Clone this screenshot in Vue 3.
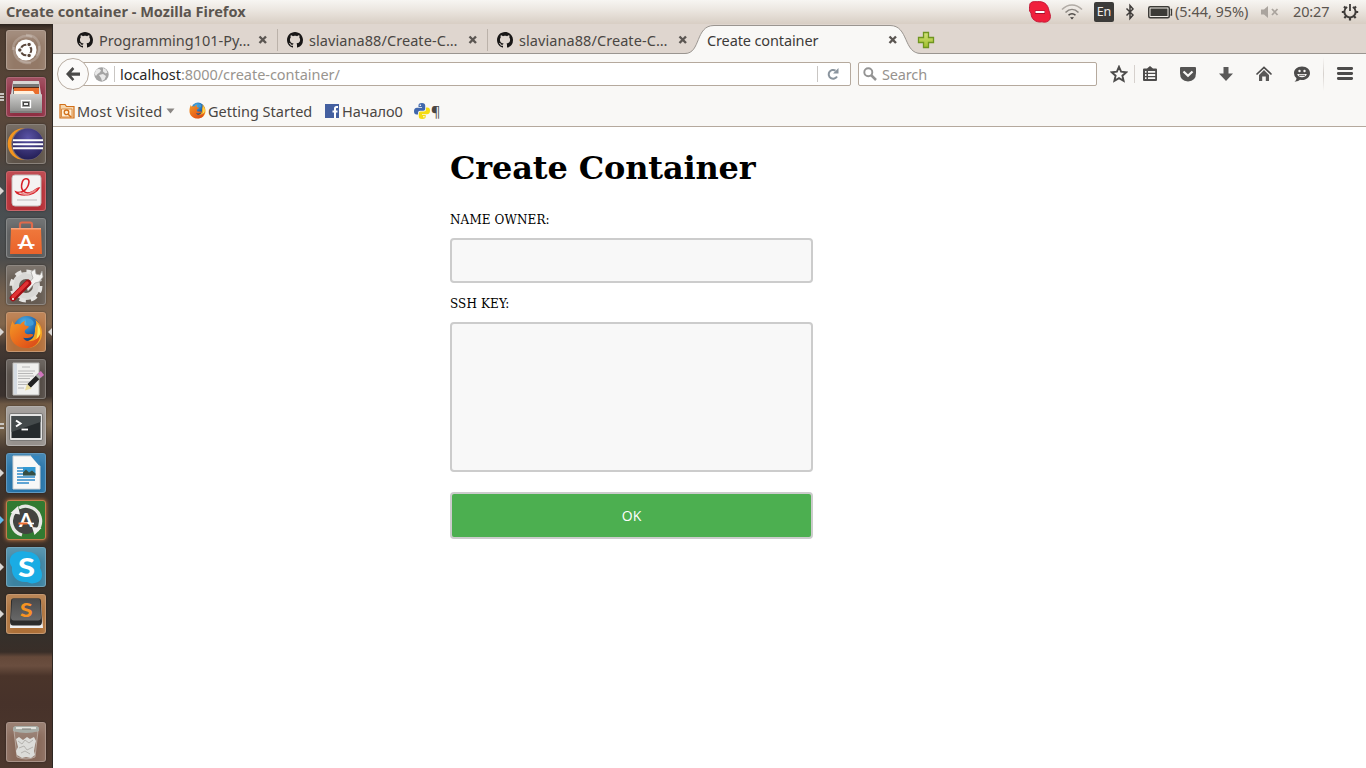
<script setup>
const githubMark = 'M8 0C3.58 0 0 3.58 0 8c0 3.54 2.29 6.53 5.47 7.59.4.07.55-.17.55-.38 0-.19-.01-.82-.01-1.49-2.01.37-2.53-.49-2.69-.94-.09-.23-.48-.94-.82-1.13-.28-.15-.68-.52-.01-.53.63-.01 1.08.58 1.23.82.72 1.21 1.87.87 2.33.66.07-.52.28-.87.51-1.07-1.78-.2-3.64-.89-3.64-3.95 0-.87.31-1.59.82-2.15-.08-.2-.36-1.02.08-2.12 0 0 .67-.21 2.2.82.64-.18 1.32-.27 2-.27s1.36.09 2 .27c1.53-1.04 2.2-.82 2.2-.82.44 1.1.16 1.92.08 2.12.51.56.82 1.27.82 2.15 0 3.07-1.87 3.75-3.65 3.95.29.25.54.73.54 1.48 0 1.07-.01 1.93-.01 2.2 0 .21.15.46.55.38A8.01 8.01 0 0 0 16 8c0-4.42-3.58-8-8-8z'
const tabs = [
  { title: 'Programming101-Py…', cls: 't-prog' },
  { title: 'slaviana88/Create-C…', cls: 't-slav' },
  { title: 'slaviana88/Create-C…', cls: 't-slav' },
]
const apps = [
  { id: 'dash' },
  { id: 'files', mark: 'bars3' },
  { id: 'eclipse' },
  { id: 'reader', mark: 'arrow' },
  { id: 'software' },
  { id: 'settings' },
  { id: 'firefox', mark: 'arrow', focus: true },
  { id: 'gedit' },
  { id: 'terminal', mark: 'bars2' },
  { id: 'writer', mark: 'arrow' },
  { id: 'updater', mark: 'arrow blue' },
  { id: 'skype', mark: 'arrow' },
  { id: 'sublime', mark: 'arrow' },
  { id: 'trash' },
]
</script>

<template>
  <div class="desktop">
    <svg class="defs" width="0" height="0">
      <defs>
        <linearGradient id="gMetal" x1="0" y1="0" x2="0" y2="1"><stop offset="0" stop-color="#cfcfcd" /><stop offset="1" stop-color="#8b8b89" /></linearGradient>
        <linearGradient id="gOrange" x1="0" y1="0" x2="0" y2="1"><stop offset="0" stop-color="#f0793c" /><stop offset="1" stop-color="#e9622a" /></linearGradient>
        <linearGradient id="gFox" x1="0" y1="0" x2="1" y2="1"><stop offset="0" stop-color="#f39a26" /><stop offset=".5" stop-color="#ea6a1c" /><stop offset="1" stop-color="#d6451a" /></linearGradient>
        <radialGradient id="gGlobe" cx=".4" cy=".25" r=".8"><stop offset="0" stop-color="#4fb6ea" /><stop offset=".6" stop-color="#1d62ac" /><stop offset="1" stop-color="#0f2f66" /></radialGradient>
        <radialGradient id="gEcl" cx=".5" cy=".3" r=".7"><stop offset="0" stop-color="#5a53a6" /><stop offset="1" stop-color="#241f56" /></radialGradient>
        <linearGradient id="gKey" x1="0" y1="0" x2="0" y2="1"><stop offset="0" stop-color="#4a4a4a" /><stop offset="1" stop-color="#686868" /></linearGradient>
        <linearGradient id="gPlus" x1="0" y1="0" x2="0" y2="1"><stop offset="0" stop-color="#d3e27a" /><stop offset="1" stop-color="#9fbf2c" /></linearGradient>
        <symbol id="fox" viewBox="0 0 36 36">
          <circle cx="19" cy="15" r="14" fill="url(#gGlobe)" />
          <path d="M18 4c3-1 5 0 7 2 2 2 1 5-1 5-3 1-5 0-6-3z" fill="#3f9bd8" />
          <path d="M28 5c5 4 7 9 7 14 0 6-3 11-8 14-4 2-8 2-11 1l-3-7c7 2 13-1 14-7 1-3 0-5 1-8 1-2 1-4 0-7z" fill="#f6a423" />
          <path d="M30 9c5 7 4 14-2 20 2-6 3-13 2-20z" fill="#fde85a" />
          <path d="M4 6c0 2 1 3 2 4 2-1 4-1 6 0 1-2 3-3 5-4-1 2-1 4 0 5l4 1c0 2-3 3-4 4-1 2 0 4 2 4 3 1 5-1 7 1-1 2-3 3-5 3-2 1-4 0-6 0 2 4 8 5 13 2 2-1 4-3 5-6 0 9-6 15-15 15C8 35 1 28 1 19 1 14 2 10 4 6z" fill="url(#gFox)" />
        </symbol>
        <symbol id="close" viewBox="0 0 10 10"><path d="M1.500 1.500l6.500 6.500M8 1.500L1.500 8" stroke="#5b5652" stroke-width="2.400" fill="none" /></symbol>
      </defs>
    </svg>

    <header class="panel">
      <div class="win-title"><span class="t-window">Create container - Mozilla Firefox</span></div>
      <div class="indicators">
        <svg class="i-skype" width="22" height="22" viewBox="0 0 22 22"><path d="M.8 5C0 1 5 0 8 .8c6-1 11 2 12 9 1 3 2 5 1 8-1 3-5 4-8 3C7 22 2 18 2 12 0 10 0 8 .8 5z" fill="#f0203c" stroke="#c41a38" stroke-width="1" /><path d="M6 11.200h10" stroke="#a8102c" stroke-width="3.600" /><path d="M6.500 11h9" stroke="#fff" stroke-width="2" /></svg>
        <svg class="i-wifi" width="22" height="16" viewBox="0 0 22 16" fill="none" stroke-width="1.600"><path d="M1 5.500C7-.5 15-.5 21 5.500" stroke="#b1aba5" /><path d="M4.500 8.500c4-4 9-4 13 0" stroke="#8b8681" /><path d="M7.500 11.300c2-2 5-2 7 0" stroke="#504c49" /><path d="M9 13.200h4L11 15.500z" fill="#3c3a38" stroke="none" /></svg>
        <div class="lang"><span class="t-en">En</span></div>
        <svg class="i-bt" width="10" height="18" viewBox="0 0 10 18"><path d="M1.500 5.500l6.500 6.500-3 3.500V2.500l3 3.500-6.500 6.500" fill="none" stroke="#3f3c3a" stroke-width="1.500" /></svg>
        <svg class="i-bat" width="25" height="13" viewBox="0 0 25 13"><rect x=".75" y=".75" width="20.500" height="11" rx="1.500" fill="#f0ece7" stroke="#3c3b37" stroke-width="1.500" /><rect x="2.500" y="2.500" width="17" height="7.500" fill="#3c3b37" /><path d="M22.500 3.500h1v5.500h-1" fill="none" stroke="#3c3b37" stroke-width="1.300" /></svg>
        <div class="battery"><span class="t-bat">(5:44, 95%)</span></div>
        <svg class="i-vol" width="18" height="12" viewBox="0 0 18 12"><path d="M0 3.500h3L7 0v12L3 8.500H0z" fill="#aaa49e" /><path d="M11 3l5.500 6M16.500 3L11 9" stroke="#aaa49e" stroke-width="1.800" /></svg>
        <div class="clock"><span class="t-clock">20:27</span></div>
        <svg class="i-power" width="18" height="18" viewBox="0 0 18 18" fill="none" stroke="#3f3c3a"><path d="M6.200 4A5.600 5.600 0 1 0 11.800 4" stroke-width="1.900" /><path d="M9 1v7" stroke-width="1.800" /><path d="M3 3.500l2 2M15 3.500l-2 2M.8 9h2.500M14.700 9h2.500M3.300 15l2-2M14.700 15l-2-2M9 14.500V17.500" stroke-width="2.200" /></svg>
      </div>
    </header>

    <div class="main">
      <nav class="launcher">
        <div v-for="a in apps" :key="a.id" class="slot" :class="'s-' + a.id">
          <i v-if="a.mark" class="mark" :class="a.mark"></i>
          <div class="tile">
            <svg v-if="a.id === 'dash'" viewBox="0 0 40 40"><g fill="none" stroke="#fff" stroke-opacity=".2" stroke-width="2.500"><path d="M7 20C7 9 17 4 26 7" /><path d="M20 5c13 0 17 13 10 21" /><path d="M33 16c3 12-9 20-19 14" /><path d="M8 17c-1 11 7 17 17 16" /></g><circle cx="20" cy="20" r="10.500" fill="#fff" /><circle cx="20" cy="20" r="5.300" fill="none" stroke="#5a473c" stroke-width="2" /><g fill="#5a473c" stroke="#fff" stroke-width="1.100"><circle cx="13.800" cy="20" r="2.300" /><circle cx="23.100" cy="14.600" r="2.300" /><circle cx="23.100" cy="25.400" r="2.300" /></g></svg>

            <svg v-else-if="a.id === 'files'" viewBox="0 0 40 40"><path d="M7 4h26l2 13H5z" fill="#d8d6d4" /><path d="M7 7h26v10H7z" fill="#777" /><path d="M7 10h26v2H7z" fill="#5a2b15" /><path d="M8 11h25v6H8z" fill="#e96d2b" /><path d="M8 14h19l2 3H8z" fill="#fff1dd" /><rect x="4" y="17" width="32" height="19" rx="1" fill="url(#gMetal)" /><path d="M4 34h32v2H4z" fill="#7e7e7c" /><rect x="15.500" y="23.500" width="9" height="7" fill="#8d8d8b" stroke="#fff" stroke-width="1.300" /><rect x="17.500" y="25.500" width="5" height="3" fill="#eee" stroke="#444" /></svg>

            <svg v-else-if="a.id === 'eclipse'" viewBox="0 0 40 40"><circle cx="17.500" cy="20" r="15.800" fill="#f4941e" /><circle cx="21.500" cy="20" r="16.200" fill="#766a72" /><circle cx="22" cy="20" r="15.500" fill="url(#gEcl)" /><path d="M7 16.300h30M7 20.300h30M7 24.300h30" stroke="#fff" stroke-width="2" /></svg>

            <svg v-else-if="a.id === 'reader'" viewBox="0 0 40 40"><rect x="6" y="4" width="29" height="31" rx="3" fill="#f4f3f2" stroke="#c2bfbd" /><path d="M10 21c5 2 12-2 13-10 0-5-6-4-7 1-2 7 3 12 10 9 3-1 5-4 7-4-2 4-8 7-14 7-5 0-8-1-9-3z" fill="none" stroke="#d72027" stroke-width="1.600" /><path d="M10 20l11 3 11-6-3 4-9 4z" fill="#e98a8a" /><path d="M11 29h20" stroke="#bbb" /></svg>

            <svg v-else-if="a.id === 'software'" viewBox="0 0 40 40"><path d="M14 12V6.500q0-2 2-2h8q2 0 2 2V12" fill="none" stroke="#df6a4b" stroke-width="2.200" /><path d="M5 10h30l1 26H4z" fill="url(#gOrange)" /><path d="M5 10h30v1.500H5z" fill="#f9a47c" /><text x="13" y="31" textLength="14" lengthAdjust="spacingAndGlyphs" font-family="Lato, sans-serif" font-weight="700" font-size="19" fill="#fff">A</text><path d="M11.500 27h17" stroke="#fff" stroke-width="1.800" /></svg>

            <svg v-else-if="a.id === 'settings'" viewBox="0 0 40 40"><circle cx="20" cy="21" r="10.500" fill="none" stroke="#d9d8d6" stroke-width="7" /><circle cx="20" cy="21" r="14.500" fill="none" stroke="#e4e3e1" stroke-width="4" stroke-dasharray="6.400 4.990" /><path d="M20 22l7-9-2-6 4-3 1 5 4 1 2-4 1 6-4 5-4 1-7 8z" fill="#f3f2f0" stroke="#a2a09e" stroke-width=".7" /><path d="M7 33l15-15" stroke="#a30f16" stroke-width="6.500" stroke-linecap="round" /><path d="M7 32l14-14" stroke="#e13335" stroke-width="3.500" stroke-linecap="round" /><circle cx="7" cy="34" r="1" fill="#fff" /></svg>

            <svg v-else-if="a.id === 'firefox'" viewBox="0 0 40 40"><use href="#fox" x="3" y="3" width="34" height="34" /></svg>

            <svg v-else-if="a.id === 'gedit'" viewBox="0 0 40 40"><path d="M7 4h26v32H7z" fill="#f0f0ee" stroke="#b9b9b7" /><path d="M8 5h3v30H8z" fill="#d5dbe2" /><path d="M16 8h8M12 12h17M12 14.500h15M12 17h16M12 19.500h12M12 23h13M12 25.500h9M12 29h6" stroke="#b0b0b0" stroke-width=".9" /><path d="M23 27L34 16" stroke="#222" stroke-width="5" /><path d="M31.500 18.500L34 16" stroke="#aaa" stroke-width="5" /><path d="M33.500 16.500l3-2.500" stroke="#cf75bd" stroke-width="5" /><path d="M19 31.500l2-6.500 4.500 4.500z" fill="#e9dc9a" /></svg>

            <svg v-else-if="a.id === 'terminal'" viewBox="0 0 40 40"><rect x="3.500" y="7.500" width="33" height="27" rx="1.500" fill="#e4e4e3" stroke="#7a7977" /><rect x="5.500" y="10" width="29" height="22" fill="#252a2c" /><path d="M5.500 10h29v6L5.500 26z" fill="#444a4b" /><path d="M10 14.500l4.500 3-4.500 3" fill="none" stroke="#fff" stroke-width="2" /><path d="M15.500 23.500H22" stroke="#fff" stroke-width="1.800" /></svg>

            <svg v-else-if="a.id === 'writer'" viewBox="0 0 40 40"><path d="M7 3h18l9 10v23H7z" fill="#f8f8f7" stroke="#ced2d5" /><path d="M25 3h8.500v10z" fill="#3587bf" /><path d="M11 15h6M11 18h6M11 21h6M11 24h18M11 27h18M11 30h12" stroke="#60a5d4" stroke-width="1.800" /><rect x="17" y="14" width="12.500" height="8.500" fill="#3299d3" /><path d="M17 22.500v-3l3-3 3 3 3-2 3.500 3v2z" fill="#354e43" /></svg>

            <svg v-else-if="a.id === 'updater'" viewBox="0 0 40 40"><circle cx="20" cy="21" r="13" fill="#434341" /><path d="M9 11.500a14.500 14.500 0 0 0 7 23.500M31 30.500a14.500 14.500 0 0 0-7-23.500q-6-2-11 1" fill="none" stroke="#e7e6e4" stroke-width="3.200" /><path d="M4.500 13l7.500-7 2 8.500zM35.500 28l-7 7-2.500-8z" fill="#f0efed" /><text x="13" y="26.500" textLength="14" lengthAdjust="spacingAndGlyphs" font-family="Lato, sans-serif" font-weight="700" font-size="18" fill="#fff">A</text><path d="M12.500 23.500h9" stroke="#ef6b31" stroke-width="2" /><path d="M22 23.500h6" stroke="#fff" stroke-width="1.600" /></svg>

            <svg v-else-if="a.id === 'skype'" viewBox="0 0 40 40"><path d="M6 8c5-5 12-4 16-3 9 0 14 8 12 16 4 7 2 14-5 15-4 1-5 0-8-1C12 36 5 30 6 20 3 16 3 12 6 8z" fill="#1aace4" /><text x="12" y="29.500" textLength="17" lengthAdjust="spacingAndGlyphs" font-family="Lato, sans-serif" font-weight="900" font-size="27" fill="#fff">S</text></svg>

            <svg v-else-if="a.id === 'sublime'" viewBox="0 0 40 40"><path d="M5 8h30l2 26H4z" fill="#f0f0f0" /><path d="M7 4.500h26q2 0 2 3l1 20q0 4-3 4H7q-3 0-3-4l1-20q0-3 2-3z" fill="#2b2b2b" /><path d="M8 4.500h24q2 0 2 3l1 16q0 3-3 3H8q-3 0-3-3l1-16q0-3 2-3z" fill="url(#gKey)" /><text x="14" y="22.500" textLength="12.500" lengthAdjust="spacingAndGlyphs" font-family="Lato, sans-serif" font-weight="900" font-size="19" fill="#f79322">S</text></svg>

            <svg v-else viewBox="0 0 40 40"><path d="M8 9l3 26q9 4 18 0l3-26z" fill="#c9c5c0" fill-opacity=".22" stroke="#ddd8d2" stroke-opacity=".5" /><path d="M10 17l3-2 4 3 4-3 3 2 4-2 2 4-1 4-1 6 1 4-4 3-5-1-4 1-5-3-1-4 2-4z" fill="#dcdcd9" /><path d="M12 19l4 3 3-4 4 3 4-3M13 26l5-2 3 4 6-3M15 31l4-2 5 3" fill="none" stroke="#b4b2ae" stroke-width="1" /><path d="M7 5.500l2-1.500h22l2 1.500v3.500q-13 4-26 0z" fill="#a8ada7" /><path d="M10 6h20" stroke="#e2e2dd" stroke-width="2" /><path d="M16 7h9" stroke="#7c7d78" /></svg>
          </div>
          <i v-if="a.focus" class="focus-mark"></i>
        </div>
      </nav>

      <section class="browser">
        <div class="tabstrip">
          <div v-for="(t, i) in tabs" :key="i" class="tab" :class="{ sep: i < 2 }">
            <svg class="fav" viewBox="0 0 16 16"><path :d="githubMark" fill="#191717" /></svg>
            <div class="tab-title"><span :class="t.cls">{{ t.title }}</span></div>
            <svg class="x" width="10" height="10"><use href="#close" /></svg>
          </div>
          <div class="tab active">
            <svg class="shape" width="240" height="30" viewBox="0 0 240 30"><path d="M0 30V29.500C16 29.500 10 1.500 29 1.500H205C224 1.500 218 29.500 236 29.500V30z" fill="#f9f8f6" /><path d="M0 29.500C16 29.500 10 1.500 29 1.500H205C224 1.500 218 29.500 236 29.500" fill="none" stroke="#9a9590" /></svg>
            <div class="tab-title"><span class="t-create">Create container</span></div>
            <svg class="x" width="10" height="10"><use href="#close" /></svg>
          </div>
          <svg class="plus" width="18" height="18" viewBox="0 0 18 18"><path d="M6.500 1.500h5v5h5v5h-5v5h-5v-5h-5v-5h5z" fill="url(#gPlus)" stroke="#6f9520" stroke-width="1.300" /></svg>
        </div>

        <div class="toolbar">
          <div class="back"><svg width="16" height="16" viewBox="0 0 16 16"><path d="M1 8l6.500-7 1.800 2-3 3.500H15v3.300H6.300l3 3.400L7.500 15z" fill="#4b4a49" /></svg></div>
          <div class="urlbar">
            <svg class="globe" width="15" height="15" viewBox="0 0 15 15"><circle cx="7.500" cy="7.500" r="7.200" fill="#a4a4a4" /><path d="M2 2.800l3-1 2 1.500-1 2L3.500 7 2 9 .6 7zM9 1l3 1.500 1.500 3-2 1-2.500-2zM5 8l4-1 3 2-1.500 3.500L8 14 7 11z" fill="#e9e9e9" /></svg>
            <i class="vline"></i>
            <div class="url"><span class="t-url"><b>localhost</b>:8000/create-container/</span></div>
            <i class="vline"></i>
            <svg class="reload" width="12" height="12" viewBox="0 0 12 12"><path d="M8.500 2.600A4.400 4.400 0 1 0 10 8.500" fill="none" stroke="#8a949e" stroke-width="2" /><path d="M11.500 0v5.500H6z" fill="#8a949e" /></svg>
          </div>
          <div class="search">
            <svg width="14" height="14" viewBox="0 0 14 14" fill="none" stroke="#949494"><circle cx="5.300" cy="5.300" r="4" stroke-width="1.900" /><path d="M8 8l5 5" stroke-width="2.500" /></svg>
            <div class="placeholder"><span class="t-search">Search</span></div>
          </div>
          <div class="tools">
            <svg viewBox="0 0 18 18"><path d="M9 1.800l2.100 4.900 5.300.5-4 3.500 1.200 5.200L9 13.200l-4.600 2.700 1.200-5.200-4-3.500 5.300-.5z" fill="none" stroke="#4d4c4b" stroke-width="1.900" /></svg>
            <i class="bar"></i>
            <svg viewBox="0 0 18 18"><path d="M6 3.500L9 1l3 2.500h3q1 0 1 1V15q0 1-1 1H3q-1 0-1-1V4.500q0-1 1-1z" fill="#4d4c4b" /><path d="M4 6.800h1.500M7 6.800h7.200M4 10h1.500M7 10h7.200M4 13.200h1.500M7 13.200h7.200" stroke="#f9f8f6" stroke-width="1.800" /></svg>
            <svg viewBox="0 0 18 18"><path d="M2 2h14q1 0 1 1v5q0 8-8 8.500Q1 16 1 8V3q0-1 1-1z" fill="#555453" /><path d="M4.500 6.500L9 10.800l4.500-4.300" fill="none" stroke="#f9f8f6" stroke-width="2.200" /></svg>
            <svg viewBox="0 0 18 18"><path d="M6.500 2h5v6.500H16L9 16 2 8.500h4.500z" fill="#5a5958" /></svg>
            <svg viewBox="0 0 18 18"><path d="M1.500 9.500L9 2.500l7.500 7" fill="none" stroke="#4d4c4b" stroke-width="1.700" /><path d="M4 10l5-5 5 5v6h-3.200v-4.500H7.200V16H4z" fill="#5a5958" /></svg>
            <svg viewBox="0 0 18 18"><path d="M9 1.500c5 0 8 3 8 6.700S13.500 15 9 15q-1 0-2-.2Q5 17 1.500 16.500q2-1 2-3.200Q1 11.500 1 8.200C1 4.500 4 1.500 9 1.500z" fill="#4d4c4b" /><circle cx="6.500" cy="6" r="1.200" fill="#f9f8f6" /><circle cx="11.500" cy="6" r="1.200" fill="#f9f8f6" /><path d="M4.200 9h9.600c-1 4.400-8.600 4.400-9.600 0z" fill="#f9f8f6" /><path d="M6 10.300h6" stroke="#4d4c4b" stroke-width=".9" /></svg>
            <i class="bar tall"></i>
            <svg class="menu" viewBox="0 0 18 18"><path d="M2.300 3.500h13.400M2.300 8.500h13.400M2.300 13.500h13.400" stroke="#4d4c4b" stroke-width="2.800" stroke-linecap="round" /></svg>
          </div>
        </div>

        <div class="bookmarks">
          <svg class="b-folder" width="16" height="16" viewBox="0 0 16 16"><path d="M1 1.500h5l1.500 2H15v11.500H1z" fill="#f6d6ac" stroke="#d2701a" stroke-width="1.200" /><path d="M2.500 6H13v8H2.500z" fill="#fff0d8" stroke="#d98b42" /><circle cx="7.500" cy="9.300" r="2.300" fill="none" stroke="#d2701a" stroke-width="1.300" /><path d="M9 11l3 3" stroke="#d2701a" stroke-width="1.500" /></svg>
          <div class="bm bm1"><span class="t-most">Most Visited</span></div>
          <svg class="caret" width="9" height="6" viewBox="0 0 9 6"><path d="M.5.500h8L4.500 5.500z" fill="#8b8784" /></svg>
          <svg class="b-fox" width="17" height="17"><use href="#fox" /></svg>
          <div class="bm bm2"><span class="t-get">Getting Started</span></div>
          <svg class="b-fb" width="14" height="14" viewBox="0 0 14 14"><path d="M0 0h14v14H0z" fill="#4460a0" /><path d="M13 3h-1.500Q10 3 10 4.500V14M7.500 7.500h5" fill="none" stroke="#fff" stroke-width="2" /></svg>
          <div class="bm bm3"><span class="t-nach">Начало0</span></div>
          <svg class="b-py" width="16" height="16" viewBox="0 0 16 16"><path d="M8 0C5 0 4.500 1 4.500 2.500V4H8v.7H3C1 4.700 0 6 0 8.200s1 3.300 2.500 3.300H4V9.800Q4 7.800 6 7.800h3.500q1.700 0 1.700-1.700V2.500Q11.200 0 8 0z" fill="#4168ad" /><path d="M8.200 16c3 0 3.500-1 3.500-2.500V12H8v-.7h5c2 0 3-1.300 3-3.500s-1-3.300-2.500-3.300H12v1.700q0 2.300-2 2.300H6.500q-1.700 0-1.700 1.700v3.300Q4.800 16 8.200 16z" fill="#f5dc12" /><circle cx="6.300" cy="2.200" r=".8" fill="#fff" /><circle cx="9.900" cy="13.700" r=".8" fill="#fff" /></svg>
          <div class="bm bm4"><span>¶</span></div>
        </div>

        <main class="page">
          <form class="form" @submit.prevent>
            <h1>Create Container</h1>
            <label for="owner">Name owner:</label>
            <input id="owner" type="text" />
            <label for="key">SSH key:</label>
            <textarea id="key"></textarea>
            <button type="submit">OK</button>
          </form>
        </main>
      </section>
    </div>
  </div>
</template>

<style>
html, body { margin: 0; overflow: hidden; background: #fff; }
</style>

<style scoped>
* { box-sizing: border-box; }
.desktop { width: 1366px; height: 768px; display: flex; flex-direction: column; font-family: "Noto Sans", "Open Sans", sans-serif; font-size: 14.5px; line-height: 20px; color: #4a4643; overflow: hidden; white-space: nowrap; }
.defs { position: absolute; }
svg { display: block; flex: none; }

.t-window { letter-spacing: .03px; }
.t-bat { letter-spacing: -.04px; }
.t-clock { letter-spacing: -.15px; }
.t-slav { letter-spacing: .07px; }
.t-create { letter-spacing: -.12px; }
.t-url { letter-spacing: -.04px; }
.t-search { letter-spacing: -.15px; }
.t-most { letter-spacing: .17px; }

.panel { height: 24px; flex: none; display: flex; align-items: center; justify-content: space-between; background: linear-gradient(#f7f5f2, #ece7e1 40%, #d8cec4); }
.win-title { padding-left: 6px; font-weight: 700; line-height: 23px; height: 24px; color: #5b554f; }
.indicators { display: flex; align-items: center; height: 24px; width: 337px; color: #5b554f; }
.i-wifi { margin-left: 10px; }
.lang { margin-left: 11px; width: 20px; height: 20px; border-radius: 2px; background: #3c3b39; color: #f0ece8; display: flex; align-items: center; justify-content: center; font-size: 12.5px; }
.i-bt { margin-left: 11px; }
.i-bat { margin-left: 13px; }
.battery { width: 86px; margin-left: 2px; }
.battery, .clock { line-height: 23px; height: 24px; }
.clock { width: 47px; margin-left: 14px; }
.i-power { margin-left: 1px; }

.main { flex: 1; display: flex; min-height: 0; }
.launcher { width: 53px; flex: none; padding-top: 6px; display: flex; flex-direction: column; gap: 7px; border-right: 1px solid #2e2723;
  background: linear-gradient(180deg, #2c231d 0, #4e3d31 6px, #5a483b 90px, #50443b 130px, #464a4c 165px, #4b5053 200px, #4d4d4c 235px, #75604d 270px, #82664c 300px, #463a33 322px, #38312e 350px, #3b322e 372px, #6d5844 380px, #7f6a50 400px, #483b32 425px, #40342c 455px, #3d3129 500px, #3a3028 560px, #35302b 610px, #392e28 628px, #65493a 633px, #6a4e3f 642px, #4a342a 652px, #47322a 680px, #4d382e 744px); }
.slot { position: relative; height: 40px; flex: none; padding-left: 6px; }
.s-trash { margin-top: 81px; }
.tile { width: 40px; height: 40px; border-radius: 3px; border: 1px solid rgba(255,255,255,.28); background: #5e5349; box-shadow: inset 0 8px 9px rgba(255,255,255,.16), 0 0 2px rgba(0,0,0,.5); }
.tile svg { width: 40px; height: 40px; margin: -1px; }
.s-dash .tile { background: #937967; }
.s-files .tile { background: #8f2f43; }
.s-reader .tile { background: #b42c33; }
.s-software .tile { background: #585a5b; }
.s-settings .tile { background: #655b52; }
.s-firefox .tile { background: #b36f3a; }
.s-gedit .tile { background: #514943; }
.s-terminal .tile { background: #96918d; }
.s-writer .tile { background: #2472a7; }
.s-updater .tile { background: #327a31; border-color: #c27e4c; box-shadow: 0 0 4px #df8748; }
.s-skype .tile { background: #3b82a0; }
.s-sublime .tile { background: #ad7038; }
.s-trash .tile { background: #88695a; }
.mark { position: absolute; left: 0; top: 16px; width: 4px; height: 8px; }
.arrow { background: #d9d6d3; clip-path: polygon(0 0, 100% 50%, 0 100%); }
.blue { background: #62b9ec; }
.bars3 { border-top: 2px solid #c9c5c1; border-bottom: 2px solid #c9c5c1; background: linear-gradient(transparent 1px, #c9c5c1 1px, #c9c5c1 3px, transparent 3px); }
.bars2 { top: 17px; height: 6px; border-top: 2px solid #c9c5c1; border-bottom: 2px solid #c9c5c1; }
.focus-mark { position: absolute; right: 0; top: 16px; width: 4px; height: 8px; background: #d9d6d3; clip-path: polygon(100% 0, 0 50%, 100% 100%); }

.browser { flex: 1; min-width: 0; display: flex; flex-direction: column; background: #f9f8f6; }
.tabstrip { height: 30px; flex: none; display: flex; align-items: stretch; padding-left: 15px; background: #dfd6cf; border-bottom: 1px solid #9a9590; }
.tab { position: relative; width: 210px; display: flex; align-items: center; padding: 2px 10px 0 9px; }
.tab.sep { background: linear-gradient(#bbb2aa, #bbb2aa) 209px 5px / 1px 22px no-repeat; }
.fav { width: 16px; height: 16px; margin-right: 6px; }
.tab-title { width: 159px; margin-right: auto; }
.active { color: #3d3b39; padding-left: 9px; }
.active .tab-title { position: relative; }
.active .x { position: relative; }
.shape { position: absolute; left: -13px; top: 0; }
.plus { margin: 7px 0 0 9px; position: relative; }

.toolbar { height: 41px; flex: none; display: flex; align-items: center; padding-left: 4px; }
.back { position: relative; z-index: 1; width: 32px; height: 32px; margin-top: -1px; flex: none; border: 1px solid #b8aca1; border-radius: 50%; background: #fbfaf9; display: flex; align-items: center; justify-content: center; }
.urlbar { width: 778px; height: 24px; margin: -1px 0 0 -16px; flex: none; display: flex; align-items: center; background: #fff; border: 1px solid #b5a99d; border-radius: 2px; padding-left: 20px; }
.vline { width: 1px; height: 16px; background: #c9c6c3; margin-left: 5px; }
.url { margin-left: 5px; flex: 1; color: #99958f; }
.url b { font-weight: 400; color: #292827; }
.reload { margin: 0 11px 0 9px; }
.search { width: 239px; height: 24px; margin: -1px 0 0 7px; flex: none; display: flex; align-items: center; background: #fff; border: 1px solid #b5a99d; border-radius: 2px; padding-left: 4px; color: #96928e; }
.placeholder { margin-left: 5px; }
.tools { display: flex; align-items: center; margin: -1px 0 0 13px; }
.tools svg { width: 18px; height: 18px; margin-right: 20px; }
.tools svg:first-child { margin-right: 6px; }
.bar { width: 1px; height: 18px; background: #d6d1cd; margin-right: 6px; }
.bar.tall { height: 34px; background: linear-gradient(transparent, #d6d1cd, transparent); margin: 0 12px 0 -8px; }

.bookmarks { height: 32px; flex: none; display: flex; align-items: center; padding-left: 6px; border-bottom: 1px solid #b5a99d; }
.bm1 { width: 86px; margin-left: 2px; }
.caret { margin-left: 3px; }
.b-fox { margin-left: 14px; }
.bm2 { width: 105px; margin-left: 2px; }
.b-fb { margin-left: 12px; }
.bm3 { width: 61px; margin-left: 3px; }
.b-py { margin-left: 11px; }
.bm4 { margin-left: 1px; }

.page { flex: 1; background: #fff; padding: 22px 0 0 397px; }
.form { width: 363px; display: flex; flex-direction: column; font-family: "DejaVu Serif", serif; color: #000; }
h1 { margin: 0 0 24px; font-size: 32px; line-height: 38px; font-weight: 700; letter-spacing: -.15px; }
label { font-family: "DejaVu Serif Condensed", "DejaVu Serif", serif; font-stretch: condensed; font-size: 13.333px; letter-spacing: .12px; line-height: 18px; height: 18px; text-transform: uppercase; margin-bottom: 9px; }
input, textarea { width: 363px; border: 2px solid #ccc; border-radius: 4px; background: #f8f8f8; margin: 0; resize: none; outline: none; display: block; }
input { height: 45px; margin-bottom: 12px; }
textarea { height: 150px; margin-bottom: 20px; }
button { height: 47px; border: 2px solid #ccc; border-radius: 4px; background: #4caf50; color: #fff; font: 14px "Open Sans", sans-serif; padding: 0; }
</style>
